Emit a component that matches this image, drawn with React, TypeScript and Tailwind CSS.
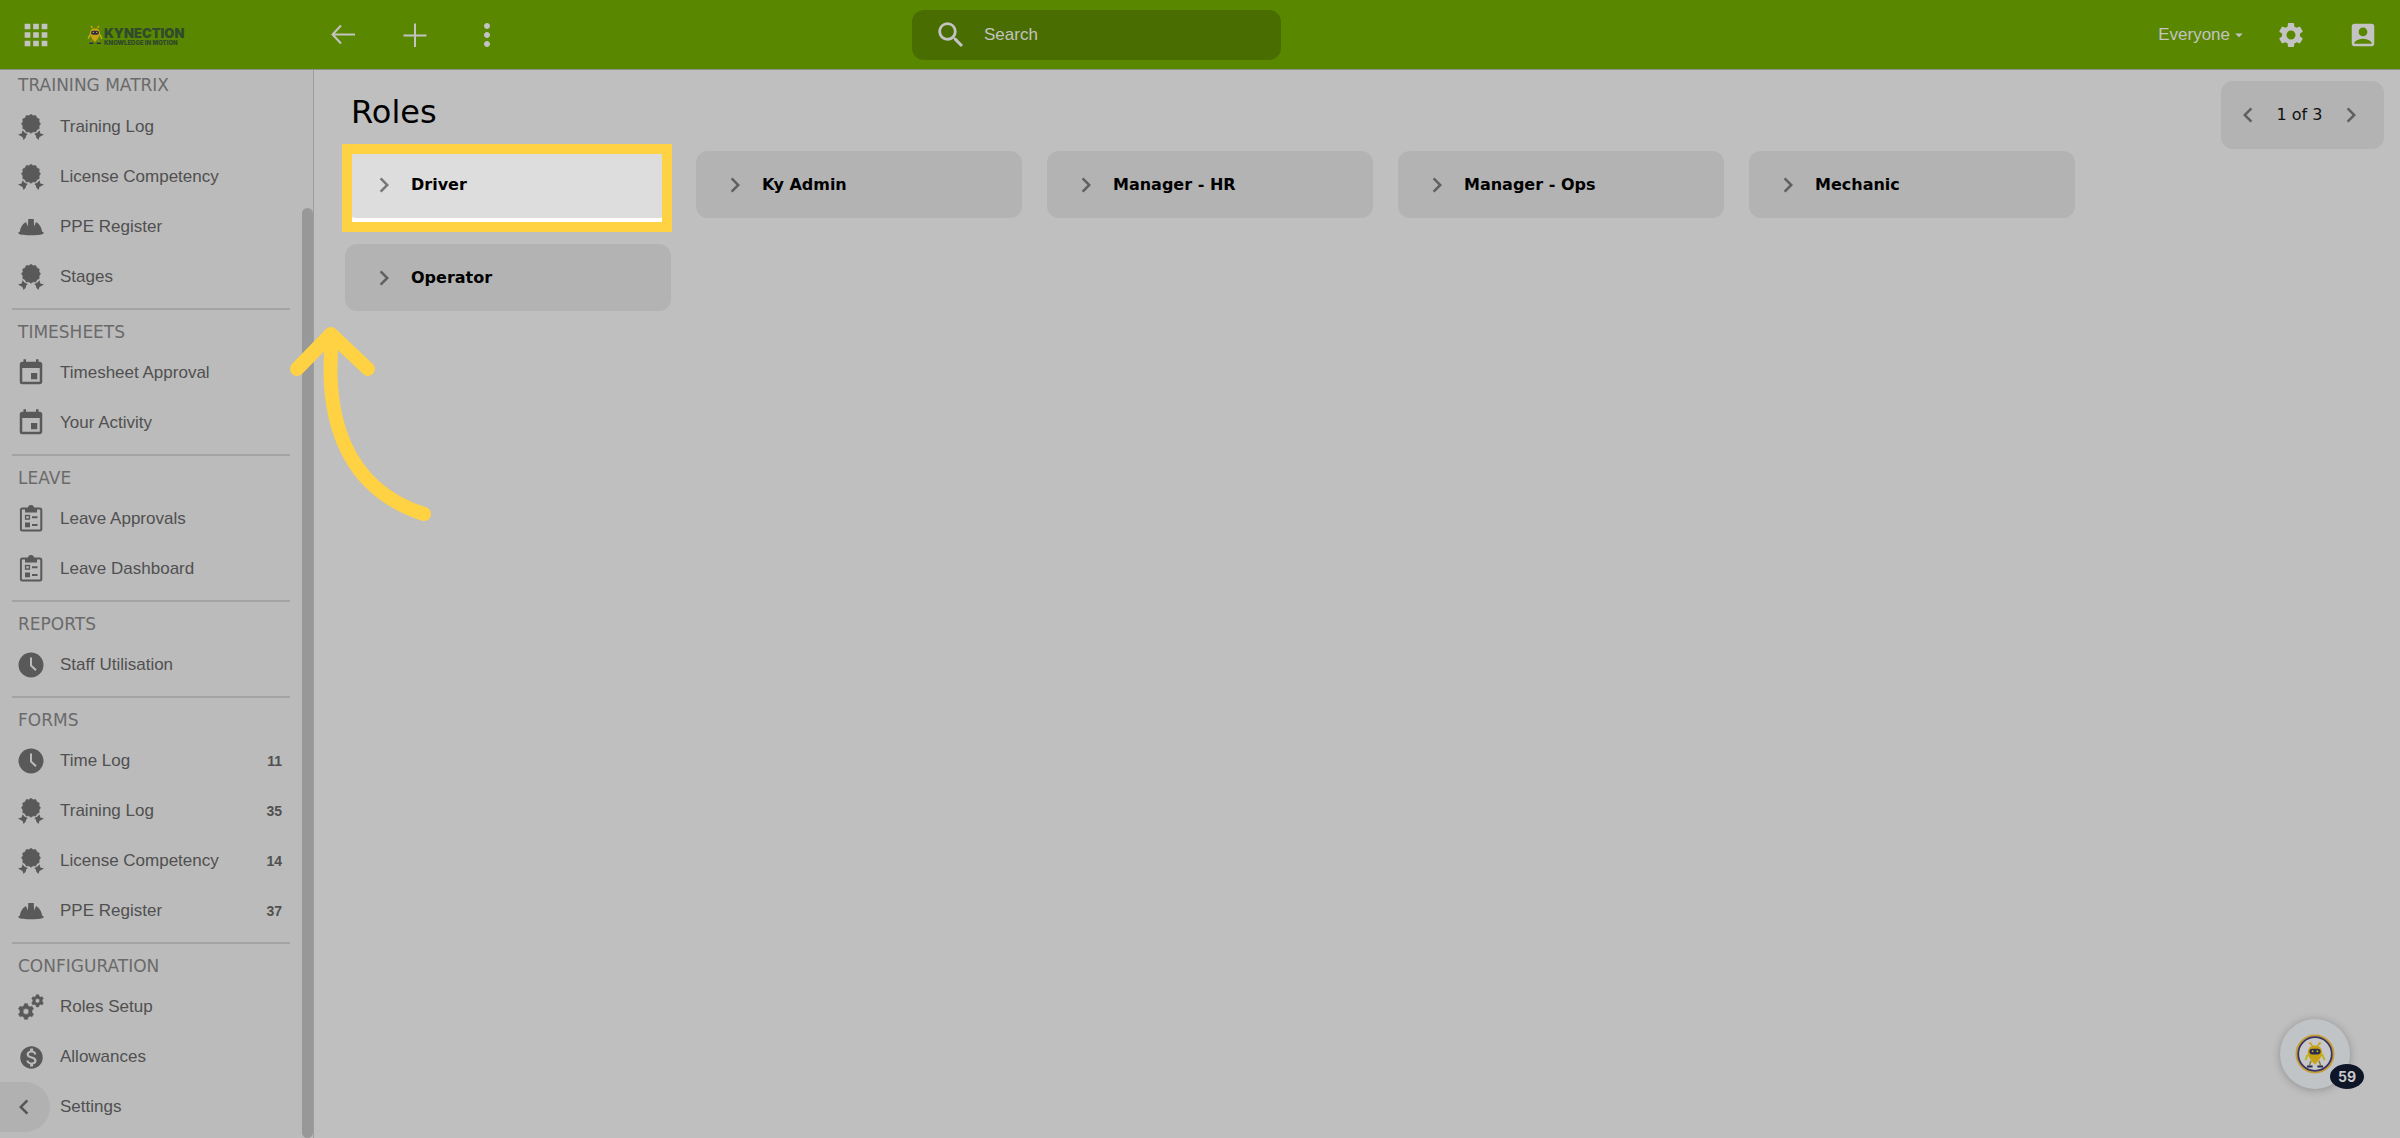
import React from "react";
import {
  MdApps, MdMoreVert, MdSearch, MdSettings, MdAccountBox, MdEvent,
  MdMonetizationOn, MdChevronLeft, MdChevronRight, MdArrowDropDown,
} from "react-icons/md";

const rosette = Array.from({ length: 24 }, (_, i) => {
  const r = i % 2 ? 8.3 : 9.5;
  const a = (i * Math.PI) / 12 - Math.PI / 2;
  return `${(13 + r * Math.cos(a)).toFixed(2)},${(9.8 + r * Math.sin(a)).toFixed(2)}`;
}).join(" ");

function AwardIcon() {
  return (
    <svg viewBox="0 0 26 26" className="size-[26px]" fill="currentColor" aria-hidden="true">
      <polygon points={rosette} stroke="currentColor" strokeWidth="0.6" strokeLinejoin="round" />
      <path d="M4.600 16.200 6.500 18.500 9.700 20 8 21.800 7.800 23.500 5.600 26 4.500 23 0 20.500 3.600 19.400z" />
      <path d="M21.400 16.200 19.500 18.500 16.300 20 18 21.800 18.200 23.500 20.400 26 21.500 23 26 20.500 22.400 19.400z" />
    </svg>
  );
}

function HelmetIcon() {
  return (
    <svg viewBox="0 0 26 26" className="size-[26px]" fill="currentColor" aria-hidden="true">
      <path d="M10.200 5h5.600v2l.4 5.500L18 8C21 9.500 23.600 13 24 17.500L25.500 18.300v1.400C22 21.700 4 21.700 .5 19.700v-1.400L2 17.500C2.400 13 5 9.500 8 8l1.800 4.500L10.200 7z" />
    </svg>
  );
}

function ClipboardIcon() {
  return (
    <svg viewBox="0 0 26 28" className="h-7 w-[26px]" fill="none" stroke="currentColor" strokeWidth="2" aria-hidden="true">
      <rect x="2.900" y="3.500" width="20.400" height="22" rx="1.500" />
      <path d="M7 3.500h3a3 3 0 0 1 6 0h3V7.500H7z" fill="currentColor" stroke="none" />
      <circle cx="13" cy="2.800" r="2" strokeWidth="1.500" />
      <rect x="7.600" y="10.500" width="3.800" height="3.600" strokeWidth="1.400" />
      <rect x="7" y="17.500" width="5" height="4.800" fill="currentColor" stroke="none" />
      <path d="M14 12.300h5.500M14 19.900h5.500" />
    </svg>
  );
}

function ClockIcon() {
  return (
    <svg viewBox="0 0 26 26" className="size-[26px]" aria-hidden="true">
      <circle cx="13" cy="13" r="12.500" fill="currentColor" />
      <path d="M13 5.500v8l5 4.800" fill="none" stroke="#bbbbbb" strokeWidth="2" />
    </svg>
  );
}

function gear(cx: number, cy: number, r: number) {
  const pts: string[] = [];
  for (let i = 0; i < 6; i++) {
    const base = (i * Math.PI) / 3 - Math.PI / 2;
    [[-0.32, 0.77], [-0.2, 1], [0.2, 1], [0.32, 0.77]].forEach(([d, k]) => {
      pts.push(`${(cx + r * k * Math.cos(base + d)).toFixed(2)} ${(cy + r * k * Math.sin(base + d)).toFixed(2)}`);
    });
  }
  const h = r * 0.36;
  return `M${pts.join("L")}zM${cx - h} ${cy}a${h} ${h} 0 1 0 ${2 * h} 0a${h} ${h} 0 1 0 ${-2 * h} 0z`;
}

function CogsIcon() {
  return (
    <svg viewBox="0 0 26 26" className="size-[26px]" fill="currentColor" fillRule="evenodd" stroke="currentColor" strokeWidth="0.5" aria-hidden="true">
      <path d={gear(8, 17.5, 8)} />
      <path d={gear(19.5, 6.8, 6.2)} />
    </svg>
  );
}

const CalendarIcon = () => <MdEvent className="size-[30px] shrink-0" aria-hidden="true" />;
const DollarIcon = () => <MdMonetizationOn className="size-[27px] shrink-0" aria-hidden="true" />;

const sidebar = [
  { title: "TRAINING MATRIX", items: [["Training Log", AwardIcon], ["License Competency", AwardIcon], ["PPE Register", HelmetIcon], ["Stages", AwardIcon]] },
  { title: "TIMESHEETS", items: [["Timesheet Approval", CalendarIcon], ["Your Activity", CalendarIcon]] },
  { title: "LEAVE", items: [["Leave Approvals", ClipboardIcon], ["Leave Dashboard", ClipboardIcon]] },
  { title: "REPORTS", items: [["Staff Utilisation", ClockIcon]] },
  { title: "FORMS", items: [["Time Log", ClockIcon, 11], ["Training Log", AwardIcon, 35], ["License Competency", AwardIcon, 14], ["PPE Register", HelmetIcon, 37]] },
  { title: "CONFIGURATION", items: [["Roles Setup", CogsIcon], ["Allowances", DollarIcon], ["Settings", null]] },
] as { title: string; items: [string, React.ComponentType | null, number?][] }[];

const roles = ["Driver", "Ky Admin", "Manager - HR", "Manager - Ops", "Mechanic", "Operator"];

function Robot() {
  return (
    <g>
      <path d="M16 9 12 4M20 9l4-5" stroke="#b5a11a" strokeWidth="1.500" />
      <circle cx="12" cy="4" r="1.500" fill="#d3a51c" />
      <circle cx="24" cy="4" r="1.500" fill="#d3a51c" />
      <path d="M9 18 6 25M27 18l3 7" stroke="#b5b81a" strokeWidth="2.500" />
      <path d="M13 26l-2 6M23 26l2 6" stroke="#8b8430" strokeWidth="2" />
      <path d="M18 7c6 0 9 4 9 9s-4 9-9 15c-5-6-9-10-9-15s3-9 9-9z" fill="#c9a214" />
      <rect x="11" y="11" width="14" height="7" rx="3.500" fill="#2c2c4e" />
      <circle cx="15" cy="14" r="1.200" fill="#c9b414" />
      <circle cx="21" cy="14" r="1.200" fill="#c9b414" />
      <path d="M8 33h7M21 33h7" stroke="#2c2c4e" strokeWidth="2.500" />
    </g>
  );
}

function Header() {
  return (
    <header className="grid h-[70px] shrink-0 grid-cols-[38%_1fr_auto] items-center border-b border-[#8d8f88] bg-[#5a8700] text-[#c3c3c3]">
      <div className="flex items-center">
        <button aria-label="Apps" className="ml-[19px]"><MdApps className="size-[34px]" /></button>
        <a href="#home" aria-label="Kynection" className="ml-[34px] flex w-[100px] items-center text-[#2f4a2c]">
          <svg viewBox="4 2 28 33" className="h-5 w-[16px] shrink-0" aria-hidden="true"><Robot /></svg>
          <span className="flex flex-col pt-1 pl-px font-['Inter',sans-serif] font-black whitespace-nowrap">
            <span className="text-[13px] leading-[12px]">KYNECTION</span>
            <span className="text-[6px] leading-[8px]">KNOWLEDGE IN MOTION</span>
          </span>
        </a>
        <div className="ml-[144px] flex items-center gap-12">
          <button aria-label="Back">
            <svg viewBox="0 0 24 24" className="size-6" fill="none" stroke="currentColor" strokeWidth="2" aria-hidden="true"><path d="M24 11.500H2M10 2.500 1.500 11.500l8.500 9" /></svg>
          </button>
          <button aria-label="Add">
            <svg viewBox="0 0 24 24" className="size-6" fill="none" stroke="currentColor" strokeWidth="2" aria-hidden="true"><path d="M12 0.500v24M0.500 12.500h23" /></svg>
          </button>
          <button aria-label="More" className="flex w-6 justify-center"><MdMoreVert className="size-[36px] shrink-0" /></button>
        </div>
      </div>
      <label className="flex h-[50px] w-[369px] items-center rounded-xl bg-[#496d00] pl-[22px]">
        <MdSearch className="size-[34px]" aria-hidden="true" />
        <input aria-label="Search" placeholder="Search" className="ml-4 w-60 bg-transparent text-[17px] outline-none placeholder:text-[#c3c3c3]" />
      </label>
      <div className="flex items-center pr-[22px]">
        <button className="flex items-center text-[17px]">Everyone<MdArrowDropDown className="size-[18px]" /></button>
        <button aria-label="Settings" className="ml-[28px]"><MdSettings className="size-[30px]" /></button>
        <button aria-label="Account" className="ml-[42px]"><MdAccountBox className="size-[30px]" /></button>
      </div>
    </header>
  );
}

function Sidebar() {
  return (
    <aside className="flex w-[314px] shrink-0 overflow-hidden border-r border-[#9d9d9d] bg-[#bbbbbb]">
      <nav className="min-w-0 flex-1 px-3">
        {sidebar.map((section, i) => (
          <section key={section.title} className={i ? "border-t-2 border-[#a3a3a3] pb-[6px]" : "pb-[6px]"}>
            <h2 className={`flex items-center pl-[6px] font-['DejaVu_Sans',sans-serif] text-[17px] text-[#6a6a6a] ${i ? "h-[38px] pt-2" : "h-8"}`}>{section.title}</h2>
            <ul>
              {section.items.map(([label, Icon, count]) => (
                <li key={label}>
                  <a href="#item" className="flex h-[50px] items-center pr-2 pl-[5px] text-[17px] text-[#505050]">
                    <span className="mr-[15px] flex w-7 shrink-0 justify-center text-[#595959]">{Icon && <Icon />}</span>
                    <span className="flex-1">{label}</span>
                    {count !== undefined && <span className="text-[14px] font-bold">{count}</span>}
                  </a>
                </li>
              ))}
            </ul>
          </section>
        ))}
      </nav>
      <div className="mt-[138px] w-[11px] shrink-0 rounded-full bg-[#989898]" />
    </aside>
  );
}

function GuideArrow() {
  return (
    <svg viewBox="0 0 150 203" className="pointer-events-none absolute top-[171px] -left-[60px] z-20 h-[203px] w-[150px]" fill="none" stroke="#ffd243" strokeWidth="14" strokeLinecap="round" strokeLinejoin="round" aria-hidden="true">
      <path d="M12 47 46 12 83 47" />
      <path d="M47 16C40 88 55 165 139 192" />
    </svg>
  );
}

export default function App() {
  return (
    <div className="flex h-screen flex-col overflow-hidden bg-[#bfbfbf] font-['Liberation_Sans',Arial,sans-serif]">
      <Header />
      <div className="flex min-h-0 flex-1">
        <Sidebar />
        <main className="min-w-0 flex-1 pr-4 pl-[31px] font-['DejaVu_Sans',Verdana,sans-serif]">
          <div className="flex h-[81px] items-start justify-between pt-[11px]">
            <h1 className="pl-1.5 text-[32px] leading-[62px] text-black">Roles</h1>
            <div className="flex h-[68px] w-[163px] items-center justify-between rounded-xl bg-[#b3b3b3] pr-[18px] pl-3 text-[16px] text-[#111]">
              <button aria-label="Previous page"><MdChevronLeft className="size-[30px] text-[#606060]" /></button>
              <span>1 of 3</span>
              <button aria-label="Next page"><MdChevronRight className="size-[30px] text-[#606060]" /></button>
            </div>
          </div>
          <ul className="grid grid-cols-[repeat(auto-fill,326px)] gap-x-[25px] gap-y-[26px]">
            {roles.map((role, i) => (
              <li key={role} className="relative">
                {i === 0 && <div className="absolute -top-[7px] -right-px -bottom-[14px] -left-[3px] bg-white" />}
                <button className={`relative flex h-[67px] w-full items-center rounded-xl pl-6 text-[16px] font-bold text-black ${i === 0 ? "bg-[#dddddd]" : "bg-[#b3b3b3]"}`}>
                  <MdChevronRight className={`size-[30px] ${i === 0 ? "text-[#777]" : "text-[#606060]"}`} />
                  <span className="ml-3">{role}</span>
                </button>
                {i === 0 && <div className="pointer-events-none absolute -top-[7px] -right-px -bottom-[14px] -left-[3px] border-[10px] border-[#ffd243]" />}
                {i === 0 && <GuideArrow />}
              </li>
            ))}
          </ul>
        </main>
      </div>
      <button aria-label="Collapse sidebar" className="absolute bottom-[6px] left-0 flex h-[50px] w-[50px] items-center rounded-r-full bg-[#b1b1b1] pl-[9px]">
        <MdChevronLeft className="size-[30px] text-[#555]" />
      </button>
      <button aria-label="Open assistant, 59 notifications" className="absolute right-[50px] bottom-[49px] flex size-[70px] items-center justify-center rounded-full bg-[#c1c4c7] shadow-[0_1px_8px_rgba(0,0,0,0.25)]">
        <svg viewBox="0 0 40 40" className="size-10" fill="none" aria-hidden="true">
          <circle cx="20" cy="20" r="18.500" fill="#c8c8cc" stroke="#c99c35" strokeWidth="2" />
          <circle cx="20" cy="20" r="16.800" stroke="#353560" strokeWidth="1.800" />
          <g transform="translate(5.600 6) scale(0.8)"><Robot /></g>
        </svg>
        <span className="absolute -right-[14px] bottom-0 flex h-[25px] w-[34px] items-center justify-center rounded-[50%] bg-[#0d1526] font-['Inter',sans-serif] text-[14px] font-bold text-[#c8c8c8]">59</span>
      </button>
    </div>
  );
}
